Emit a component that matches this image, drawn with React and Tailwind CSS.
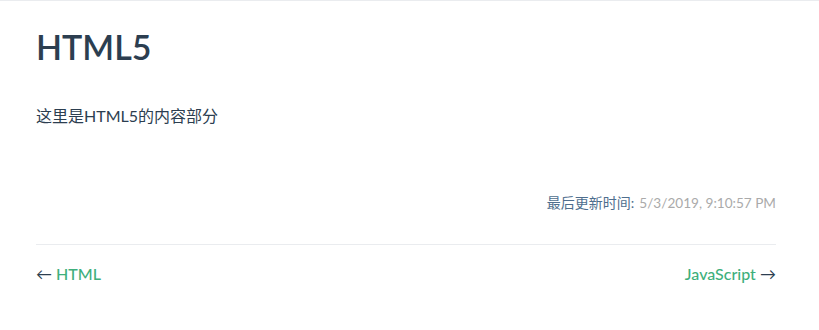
import React from "react";

// Página de conteúdo simples, estilo tema padrão de documentação
const font = {
  fontFamily: '"Lato", "Noto Sans CJK SC", sans-serif',
};

const PageNav = ({ prev, next }) => (
  <div className="flex justify-between items-center pt-[18px] text-base leading-[22px]">
    <span className="text-[#2c3e50]">
      ← <a href="#" className="text-[#3eaf7c] font-medium">{prev}</a>
    </span>
    <span className="text-[#2c3e50]">
      <a href="#" className="text-[#3eaf7c] font-medium">{next}</a> →
    </span>
  </div>
);

export default function App() {
  return (
    <div className="bg-white min-h-[330px] text-[#2c3e50]" style={font}>
      {/* linha da barra de navegação */}
      <div className="h-px bg-[#eaecef]" />

      <main className="ml-9 w-[740px]">
        <h1 className="pt-[24px] text-[34px] font-semibold leading-[44px] text-[#2c3e50]">
          HTML5
        </h1>
        <p className="mt-[34px] text-base leading-[26px]">这里是HTML5的内容部分</p>

        <div className="mt-[62px] flex justify-end text-[14px] leading-[24px]">
          <span className="text-[#4e6e8e]">最后更新时间:</span>
          <span className="ml-[5px] text-[#aaa] text-[13.6px]">5/3/2019, 9:10:57 PM</span>
        </div>

        <div className="mt-[29px] border-t border-[#eaecef]" />

        <PageNav prev="HTML" next="JavaScript" />
      </main>
    </div>
  );
}
